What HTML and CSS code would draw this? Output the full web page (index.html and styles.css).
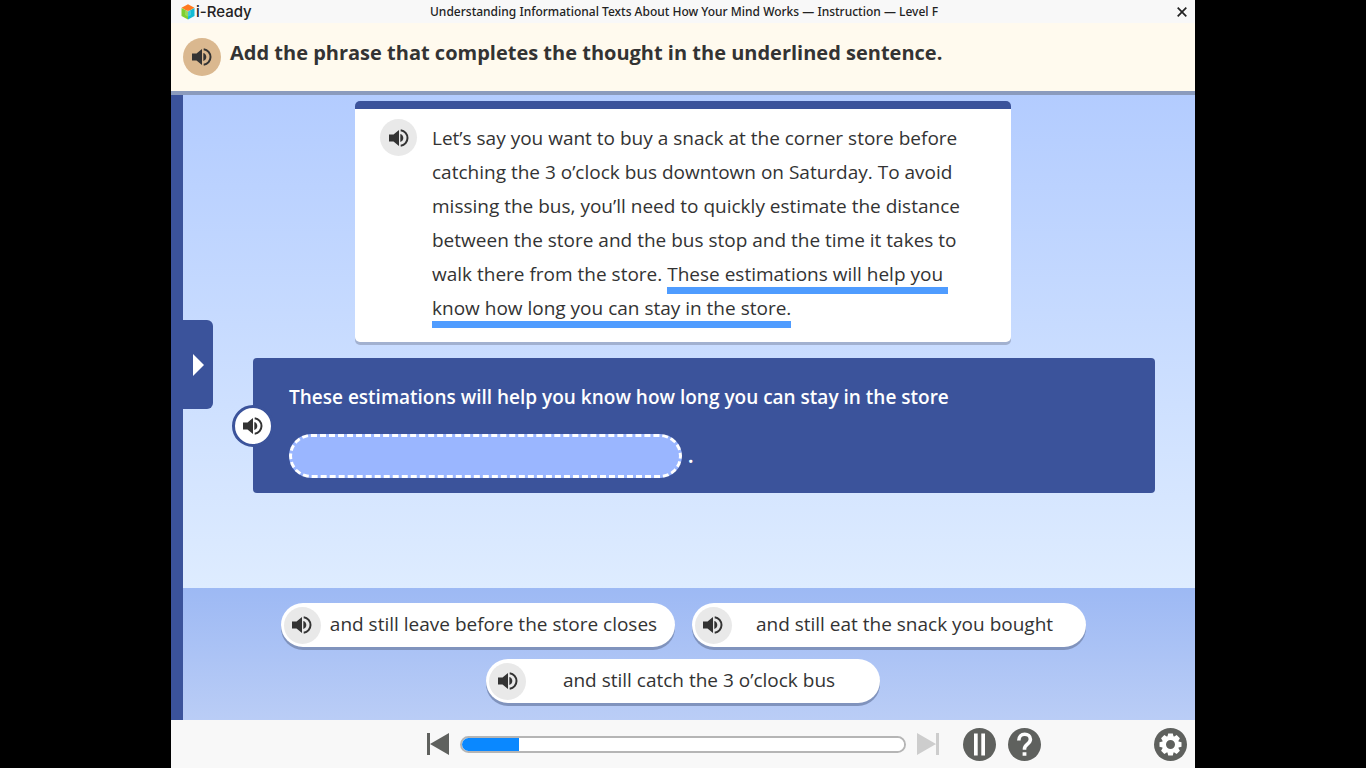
FILE: index.html
```html
<!DOCTYPE html>
<html lang="en">
<head>
    <meta charset="UTF-8">
    <meta name="viewport" content="width=device-width, initial-scale=1.0">
    <title>i-Ready</title>
    <link rel="stylesheet" href="styles.css">
</head>
<body>
    <svg class="sprite" aria-hidden="true">
        <symbol id="speaker" viewBox="0 0 20 18">
            <path d="M0 5.500h4.500l5.500-4.400v15.800L4.500 12.500H0z" fill="currentColor"/>
            <path d="M11.300 5c2 .6 3 2.200 3 4s-1 3.400-3 4z" fill="currentColor"/>
            <path d="M11.700 1.300c4 .5 6.800 3.800 6.800 7.700s-2.800 7.200-6.800 7.700" fill="none" stroke="currentColor" stroke-width="2"/>
        </symbol>
    </svg>
    <div class="lesson">
        <header class="top-bar">
            <div class="logo">
                <svg class="logo-cube" viewBox="0 0 14 16" aria-hidden="true">
                    <path d="M7 .3L13.500 3.800 7 7.500.5 3.800z" fill="#ff7a1f"/>
                    <path d="M.5 4L7 7.500v8L.5 12z" fill="#7ed030"/>
                    <path d="M13.500 4L7 7.500v8l6.500-3.500z" fill="#12bcd4"/>
                    <path d="M7 5.500l3 1.800v3.600l-3 1.800-3-1.800V7.300z" fill="#fff" opacity=".2"/>
                </svg>
                <span>i-Ready</span>
            </div>
            <h1 class="lesson-title">Understanding Informational Texts About How Your Mind Works — Instruction — Level F</h1>
            <button class="close-btn" aria-label="Close">
                <svg width="10" height="10" viewBox="0 0 10 10"><path d="M.7.7l8.600 8.600M9.300.7L.7 9.300" stroke="#222" stroke-width="1.700"/></svg>
            </button>
        </header>

        <div class="prompt">
            <button class="audio audio-prompt" aria-label="Listen"><svg><use href="#speaker"/></svg></button>
            <h2>Add the phrase that completes the thought in the underlined sentence.</h2>
        </div>

        <main class="workspace">
            <button class="drawer-tab" aria-label="Open panel">
                <svg width="11" height="22" viewBox="0 0 11 22"><path d="M0 0l11 11L0 22z" fill="#fff"/></svg>
            </button>
            <div class="content">
                <section class="passage">
                    <button class="audio" aria-label="Listen to passage"><svg><use href="#speaker"/></svg></button>
                    <p>Let’s say you want to buy a snack at the corner store before catching the 3 o’clock bus downtown on Saturday. To avoid missing the bus, you’ll need to quickly estimate the distance between the store and the bus stop and the time it takes to walk there from the store. <span class="underlined underlined-start">These estimations will help you</span> <span class="underlined">know how long you can stay in the store.</span></p>
                </section>
                <section class="question">
                    <button class="audio audio-question" aria-label="Listen to sentence"><svg><use href="#speaker"/></svg></button>
                    <p>These estimations will help you know how long you can stay in the store</p>
                    <div class="answer">
                        <div class="drop-zone"></div>
                        <span>.</span>
                    </div>
                </section>
            </div>
            <section class="tray">
                <div class="choice">
                    <button class="audio" aria-label="Listen to choice 1"><svg><use href="#speaker"/></svg></button>
                    <button class="choice-text">and still leave before the store closes</button>
                </div>
                <div class="choice">
                    <button class="audio" aria-label="Listen to choice 2"><svg><use href="#speaker"/></svg></button>
                    <button class="choice-text">and still eat the snack you bought</button>
                </div>
                <div class="choice">
                    <button class="audio" aria-label="Listen to choice 3"><svg><use href="#speaker"/></svg></button>
                    <button class="choice-text">and still catch the 3 o’clock bus</button>
                </div>
            </section>
        </main>

        <footer class="controls">
            <button class="skip" aria-label="Previous">
                <svg width="22" height="22" viewBox="0 0 22 22"><path d="M0 0h3v22H0zM22 0v22L3 11z"/></svg>
            </button>
            <progress class="progress" value="13" max="100" aria-label="Lesson progress"></progress>
            <button class="skip" aria-label="Next" disabled>
                <svg width="22" height="22" viewBox="0 0 22 22"><path d="M19 0h3v22h-3zM0 0v22l19-11z"/></svg>
            </button>
            <button class="round pause" aria-label="Pause">
                <svg width="33" height="33" viewBox="0 0 33 33"><circle cx="16.500" cy="16.500" r="16.500" fill="#5f615e"/><path d="M11 5.500h3.700v22H11zM18.300 5.500H22v22h-3.700z" fill="#fff"/></svg>
            </button>
            <button class="round" aria-label="Help">
                <svg width="33" height="33" viewBox="0 0 33 33"><circle cx="16.500" cy="16.500" r="16.500" fill="#5f615e"/><path d="M10.800 12.500c0-4 2.500-6.200 5.900-6.200 3.300 0 5.700 2 5.700 5 0 4.800-5.900 4.800-5.900 9.500v1" fill="none" stroke="#fff" stroke-width="3.600"/><path d="M14.600 24.300h3.800v3.500h-3.800z" fill="#fff"/></svg>
            </button>
            <button class="round settings" aria-label="Settings">
                <svg width="33" height="33" viewBox="0 0 33 33"><circle cx="16.500" cy="16.500" r="16.500" fill="#5f615e"/>
                    <g transform="translate(16.500 16.500)" fill="#fff">
                        <path d="M-2.300-11h4.600l1 4h-6.600zM-2.300 11h4.600l1-4h-6.600z"/>
                        <path d="M-2.300-11h4.600l1 4h-6.600zM-2.300 11h4.600l1-4h-6.600z" transform="rotate(45)"/>
                        <path d="M-2.300-11h4.600l1 4h-6.600zM-2.300 11h4.600l1-4h-6.600z" transform="rotate(90)"/>
                        <path d="M-2.300-11h4.600l1 4h-6.600zM-2.300 11h4.600l1-4h-6.600z" transform="rotate(135)"/>
                        <circle r="6.500" fill="none" stroke="#fff" stroke-width="4"/>
                    </g>
                </svg>
            </button>
        </footer>
    </div>
</body>
</html>
```
FILE: styles.css
```css
* {
    box-sizing: border-box;
}
body {
    margin: 0;
    background: #000;
    color: #333;
    font-family: "Open Sans", sans-serif;
}
button {
    padding: 0;
    border: none;
    background: none;
    color: inherit;
    font: inherit;
    cursor: pointer;
}
button svg {
    display: block;
}
h1, h2, p {
    margin: 0;
}
.sprite {
    display: none;
}
.lesson {
    display: flex;
    flex-direction: column;
    width: 100%;
    max-width: calc(100vh * 4 / 3);
    min-height: 100vh;
    margin: 0 auto;
}

/* top bar */
.top-bar {
    display: grid;
    grid-template-columns: 1fr auto 1fr;
    align-items: center;
    height: 23px;
    padding: 0 8px 0 10px;
    background: #f8f8f8;
}
.logo {
    display: flex;
    align-items: center;
    gap: 1px;
    color: #222;
    font-family: Inter, sans-serif;
    font-size: 15px;
    font-weight: 500;
    line-height: 22px;
}
.logo-cube {
    width: 14px;
    height: 16px;
}
.lesson-title {
    color: #222;
    font-family: "Noto Sans", sans-serif;
    font-size: 12px;
    font-weight: 500;
    line-height: 23px;
}
.close-btn {
    justify-self: end;
}

/* prompt */
.prompt {
    display: flex;
    align-items: center;
    gap: 9px;
    min-height: 72px;
    padding: 0 12px;
    background: #fffaee;
    border-bottom: 4px solid #8b9bbd;
}
.prompt h2 {
    padding-bottom: 8px;
    font-size: 20px;
    font-weight: 700;
    line-height: 28px;
}
.audio {
    display: flex;
    flex: none;
    align-items: center;
    justify-content: center;
    width: 37px;
    height: 37px;
    border-radius: 50%;
    background: #e9e9e9;
    color: #333;
}
.audio svg {
    width: 20px;
    height: 18px;
}
.audio-prompt {
    width: 38px;
    height: 38px;
    background: #dab88f;
}

/* workspace */
.workspace {
    position: relative;
    display: flex;
    flex: 1;
    flex-direction: column;
    border-left: 12px solid #3b539b;
}
.drawer-tab {
    position: absolute;
    top: 225px;
    left: 0;
    display: flex;
    align-items: center;
    justify-content: center;
    width: 30px;
    height: 89px;
    border-radius: 0 6px 6px 0;
    background: #3b539b;
}
.content {
    flex: 1;
    padding: 6px 12px 20px 0;
    background: linear-gradient(#b3ccff, #deecff);
}
.passage {
    display: flex;
    gap: 15px;
    width: 656px;
    max-width: 90%;
    margin: 0 auto;
    padding: 10px 35px 17px 25px;
    border-top: 8px solid #3b539b;
    border-radius: 5px;
    background: #fff;
    box-shadow: 0 3px 0 #a2b1d0;
    font-size: 19px;
    line-height: 34px;
}
.passage p {
    padding-top: 2px;
}
.underlined {
    border-bottom: 7px solid #4f9cff;
}
.underlined-start {
    padding-right: 5px;
}
.question {
    position: relative;
    margin: 16px 28px 0 70px;
    padding: 24px 36px 15px;
    border-radius: 4px;
    background: #3b539b;
    color: #fff;
    font-size: 19px;
    font-weight: 600;
    line-height: 30px;
}
.audio-question {
    position: absolute;
    top: 47px;
    left: -21px;
    width: 42px;
    height: 42px;
    border: 3px solid #3b539b;
    background: #fff;
}
.answer {
    display: flex;
    align-items: center;
    gap: 6px;
    margin-top: 22px;
    font-weight: 700;
}
.drop-zone {
    width: 393px;
    height: 44px;
    border: 3px dashed #fff;
    border-radius: 22px;
    background: #9ab6ff;
}

/* answer choices */
.tray {
    display: flex;
    flex-wrap: wrap;
    justify-content: center;
    gap: 12px 17px;
    padding: 15px 12px 17px 0;
    background: linear-gradient(#9db9f4, #bacdf6);
}
.choice {
    display: flex;
    align-items: center;
    width: 394px;
    height: 44px;
    padding: 0 8px 0 3px;
    border-radius: 22px;
    background: #fff;
    box-shadow: 0 3px 0 #8093bd;
}
.choice-text {
    flex: 1;
    padding-bottom: 3px;
    font-size: 19px;
    line-height: 30px;
}

/* player controls */
.controls {
    display: flex;
    align-items: center;
    height: 48px;
    padding: 0 8px 0 25%;
    background: #f8f8f8;
}
.skip {
    fill: #5f615e;
}
.skip:disabled {
    fill: #cdcdcd;
}
.progress {
    flex: 0 1 446px;
    min-width: 0;
    height: 17px;
    margin: 0 11px;
    overflow: hidden;
    appearance: none;
    border: 2px solid #b5b5b5;
    border-radius: 9px;
    background: #fff;
}
.progress::-webkit-progress-bar {
    background: #fff;
}
.progress::-webkit-progress-value {
    background: #0a88ff;
}
.pause {
    margin: 0 12px 0 24px;
}
.settings {
    margin-left: auto;
}
```
